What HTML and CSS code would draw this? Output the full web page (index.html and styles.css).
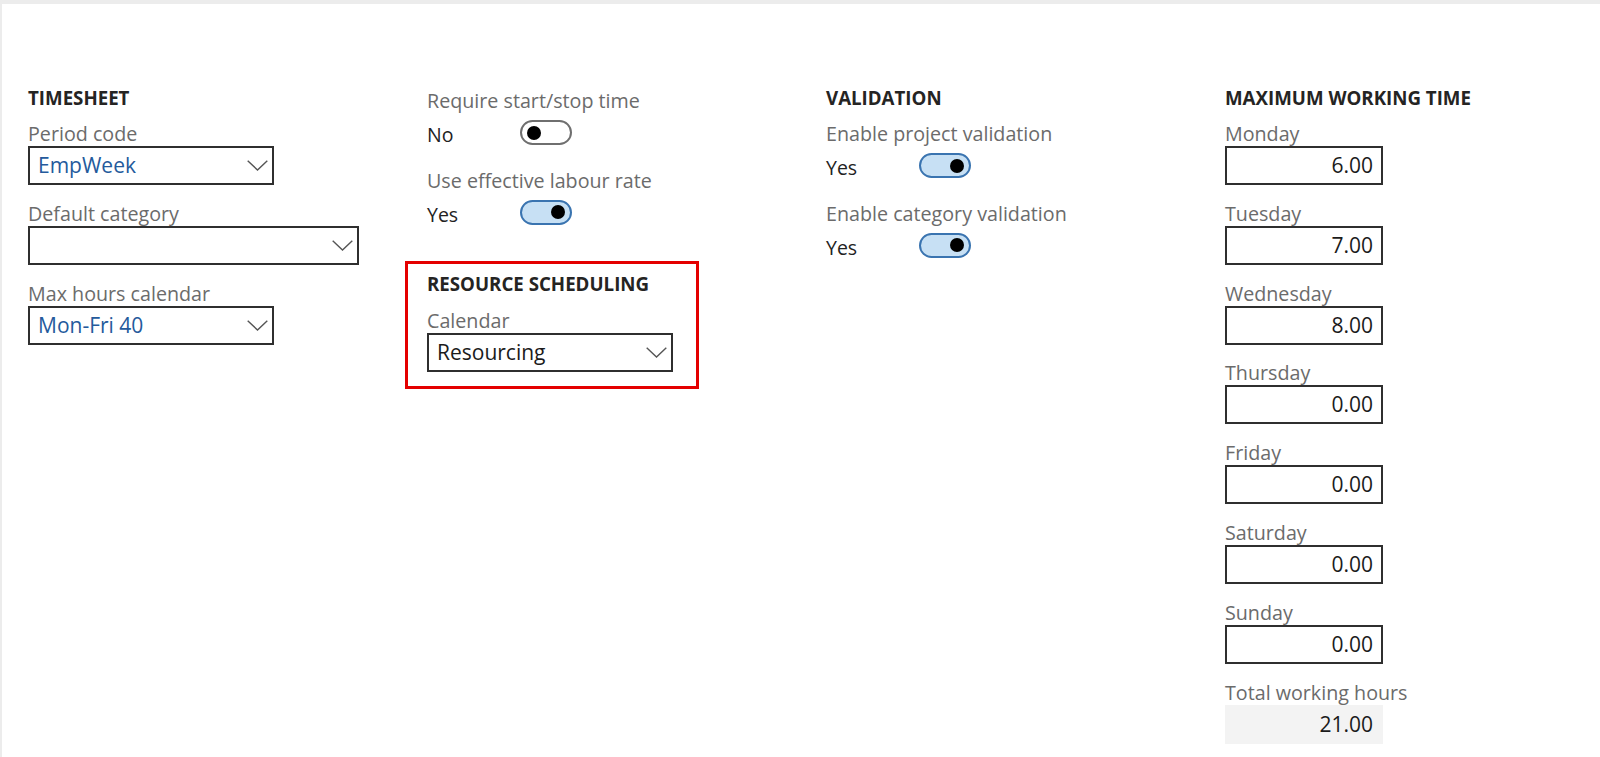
FILE: index.html
```html
<!DOCTYPE html>
<html lang="en">
<head>
<meta charset="utf-8">
<title>Project management parameters</title>
<link rel="stylesheet" href="styles.css">
</head>
<body>
<div class="page">
  <div class="columns">
    <section class="col">
      <h2 class="heading">TIMESHEET</h2>
      <div class="field">
        <div class="label">Period code</div>
        <div class="input select w-md"><span class="value link">EmpWeek</span><svg class="chev" viewBox="0 0 21 11" width="21" height="11"><path d="M0.7 0.7 L10.5 10 L20.3 0.7" fill="none" stroke="#555" stroke-width="1.4"/></svg></div>
      </div>
      <div class="field">
        <div class="label">Default category</div>
        <div class="input select w-lg"><span class="value"></span><svg class="chev" viewBox="0 0 21 11" width="21" height="11"><path d="M0.7 0.7 L10.5 10 L20.3 0.7" fill="none" stroke="#555" stroke-width="1.4"/></svg></div>
      </div>
      <div class="field">
        <div class="label">Max hours calendar</div>
        <div class="input select w-md"><span class="value link">Mon-Fri 40</span><svg class="chev" viewBox="0 0 21 11" width="21" height="11"><path d="M0.7 0.7 L10.5 10 L20.3 0.7" fill="none" stroke="#555" stroke-width="1.4"/></svg></div>
      </div>
    </section>

    <section class="col col-offset">
      <div class="field">
        <div class="label">Require start/stop time</div>
        <div class="toggle-row"><span class="toggle-value">No</span><span class="toggle off"><span class="dot"></span></span></div>
      </div>
      <div class="field">
        <div class="label">Use effective labour rate</div>
        <div class="toggle-row"><span class="toggle-value">Yes</span><span class="toggle on"><span class="dot"></span></span></div>
      </div>
      <div class="highlight">
        <h2 class="heading">RESOURCE SCHEDULING</h2>
        <div class="field last">
          <div class="label">Calendar</div>
          <div class="input select w-md"><span class="value">Resourcing</span><svg class="chev" viewBox="0 0 21 11" width="21" height="11"><path d="M0.7 0.7 L10.5 10 L20.3 0.7" fill="none" stroke="#555" stroke-width="1.4"/></svg></div>
        </div>
      </div>
    </section>

    <section class="col">
      <h2 class="heading">VALIDATION</h2>
      <div class="field">
        <div class="label">Enable project validation</div>
        <div class="toggle-row"><span class="toggle-value">Yes</span><span class="toggle on"><span class="dot"></span></span></div>
      </div>
      <div class="field">
        <div class="label">Enable category validation</div>
        <div class="toggle-row"><span class="toggle-value">Yes</span><span class="toggle on"><span class="dot"></span></span></div>
      </div>
    </section>

    <section class="col">
      <h2 class="heading">MAXIMUM WORKING TIME</h2>
      <div class="field">
        <div class="label">Monday</div>
        <div class="input number w-sm"><span class="value">6.00</span></div>
      </div>
      <div class="field">
        <div class="label">Tuesday</div>
        <div class="input number w-sm"><span class="value">7.00</span></div>
      </div>
      <div class="field">
        <div class="label">Wednesday</div>
        <div class="input number w-sm"><span class="value">8.00</span></div>
      </div>
      <div class="field">
        <div class="label">Thursday</div>
        <div class="input number w-sm"><span class="value">0.00</span></div>
      </div>
      <div class="field">
        <div class="label">Friday</div>
        <div class="input number w-sm"><span class="value">0.00</span></div>
      </div>
      <div class="field">
        <div class="label">Saturday</div>
        <div class="input number w-sm"><span class="value">0.00</span></div>
      </div>
      <div class="field">
        <div class="label">Sunday</div>
        <div class="input number w-sm"><span class="value">0.00</span></div>
      </div>
      <div class="field">
        <div class="label">Total working hours</div>
        <div class="input number readonly w-sm"><span class="value">21.00</span></div>
      </div>
    </section>
  </div>
</div>
</body>
</html>
```

FILE: styles.css
```css
html, body {
  margin: 0;
  padding: 0;
  background: #ffffff;
}

body {
  font-family: "Open Sans", "Noto Sans", "Liberation Sans", sans-serif;
  color: #222222;
  height: 757px;
  overflow: hidden;
  box-sizing: border-box;
  border-top: 4px solid #ececec;
  border-left: 2px solid #ececec;
}

.page {
  padding: 81px 0 0 26px;
}

.columns {
  display: grid;
  grid-template-columns: repeat(4, 399px);
  align-items: start;
}

.col {
  display: flex;
  flex-direction: column;
  align-items: flex-start;
}

.col-offset {
  padding-top: 3px;
}

.heading {
  margin: 0 0 11px 0;
  font-size: 18.7px;
  line-height: 25px;
  font-weight: 700;
  color: #252423;
  letter-spacing: 0;
  white-space: nowrap;
}

.field {
  display: flex;
  flex-direction: column;
  align-items: flex-start;
  margin-bottom: 15.8px;
}

.field.last {
  margin-bottom: 0;
}

.label {
  font-size: 19.7px;
  line-height: 25px;
  color: #6b6b6b;
  white-space: nowrap;
}

.input {
  box-sizing: border-box;
  height: 39px;
  border: 2px solid #2f2f2f;
  background: #ffffff;
  display: flex;
  align-items: center;
  padding: 0 8px;
}

.input .value {
  font-size: 21px;
  line-height: 27px;
  color: #1b1b1b;
  white-space: nowrap;
}

.input .value.link {
  color: #245a9c;
}

.select {
  justify-content: space-between;
  padding-right: 4px;
}

.number {
  justify-content: flex-end;
}

.readonly {
  border-color: transparent;
  background: #f3f3f3;
}

.w-sm { width: 158px; }
.w-md { width: 246px; }
.w-lg { width: 331px; }

.chev {
  display: block;
  flex: none;
}

.toggle-row {
  height: 39px;
  display: flex;
  align-items: center;
}

.toggle-value {
  width: 93px;
  font-size: 19.5px;
  line-height: 25px;
  padding-top: 4px;
  color: #222222;
}

.toggle {
  box-sizing: border-box;
  width: 52px;
  height: 25px;
  border-radius: 13px;
  border: 2px solid #6f6f6f;
  background: #ffffff;
  display: flex;
  align-items: center;
  padding: 0 5px;
}

.toggle.on {
  border-color: #3a74b0;
  background: #c7e0f4;
  justify-content: flex-end;
}

.dot {
  width: 14px;
  height: 14px;
  border-radius: 50%;
  background: #000000;
}

.highlight {
  box-sizing: border-box;
  width: 294px;
  margin: 13px 0 0 -22px;
  padding: 7px 20px 14px 19px;
  border: 3px solid #e40000;
}

.highlight .heading {
  margin-bottom: 12px;
}
```
